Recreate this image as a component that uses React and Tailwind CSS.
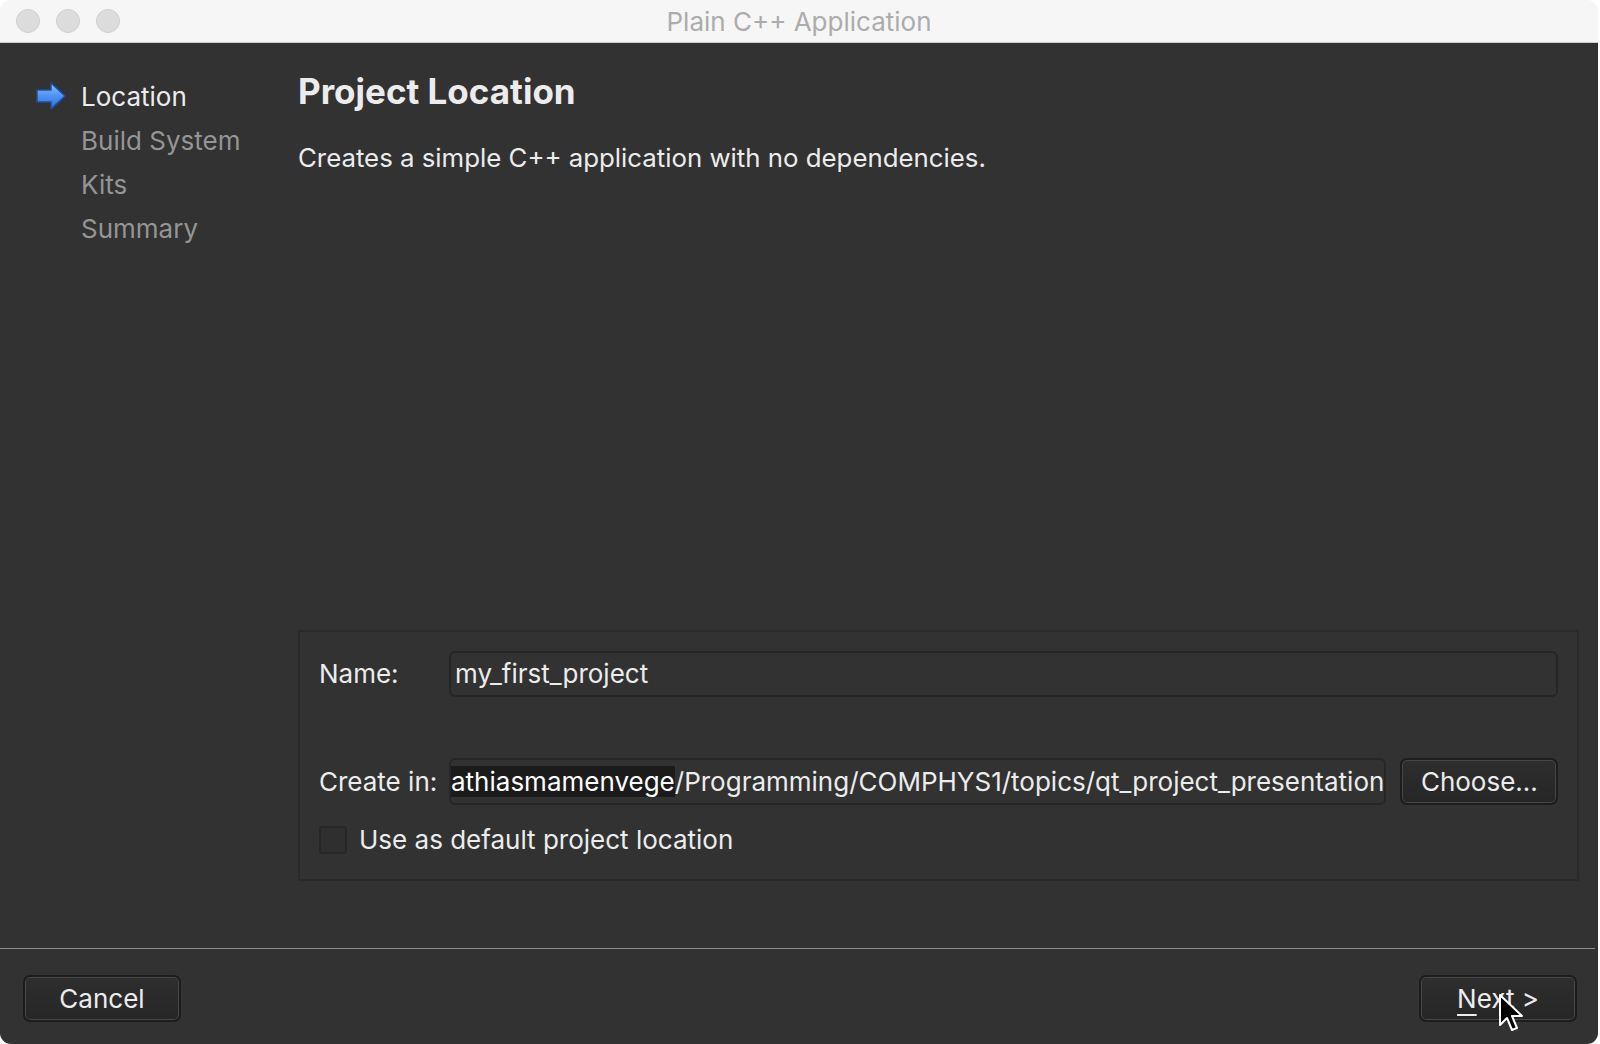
import React from 'react';

const font = { fontFamily: 'Inter, "Noto Sans", sans-serif' };

function TrafficLight() {
  return <div className="w-[24px] h-[24px] rounded-full bg-[#dcdcdc] border border-[#cfcfcf]" />;
}

function StepArrow() {
  return (
    <svg width="32" height="30" viewBox="0 0 32 30">
      <defs>
        <linearGradient id="arrowFill" x1="0" y1="0" x2="0" y2="1">
          <stop offset="0" stopColor="#8cc0ff" />
          <stop offset="0.5" stopColor="#4f92f0" />
          <stop offset="1" stopColor="#2f6fd6" />
        </linearGradient>
      </defs>
      <path
        d="M2 9 L16 9 L16 2 L30 15 L16 28 L16 21 L2 21 Z"
        fill="url(#arrowFill)"
        stroke="#1d4fa8"
        strokeWidth="1.5"
        strokeLinejoin="round"
      />
    </svg>
  );
}

function Cursor() {
  return (
    <svg width="26" height="40" viewBox="0 0 13 20" className="absolute left-[1498px] top-[993px]">
      <path
        d="M1 1 L1 16 L4.5 12.5 L7 18.5 L9.5 17.5 L7 11.5 L12 11.5 Z"
        fill="#000"
        stroke="#fff"
        strokeWidth="1"
        strokeLinejoin="round"
      />
    </svg>
  );
}

function MacButton({ children, className = '' }) {
  return (
    <div
      className={
        'h-[47px] rounded-[7px] border-2 border-[#1d1d1d] bg-gradient-to-b from-[#2e2e2e] to-[#262626] shadow-[inset_0_0_0_1px_#474747] flex items-center justify-center text-[26px] text-[#ececec] ' +
        className
      }
    >
      {children}
    </div>
  );
}

export default function App() {
  const steps = ['Location', 'Build System', 'Kits', 'Summary'];

  return (
    <div className="w-[1600px] h-[1044px] bg-white relative overflow-hidden" style={font}>
      <div className="w-[1598px] h-[1044px] rounded-[11px] overflow-hidden flex flex-col">
        {/* title bar */}
        <div className="h-[43px] shrink-0 bg-[#f6f6f6] border-b border-[#cdcdcd] flex items-center relative">
          <div className="flex items-center gap-[16px] pl-[16px]">
            <TrafficLight />
            <TrafficLight />
            <TrafficLight />
          </div>
          <div className="absolute inset-0 flex items-center justify-center text-[26px] text-[#acacac]">
            Plain C++ Application
          </div>
        </div>

        {/* body */}
        <div className="flex-1 bg-[#323232] flex flex-col">
          <div className="flex-1 flex">
            <div className="w-[298px] shrink-0 pt-[31px]">
              {steps.map((step, i) => (
                <div key={step} className="h-[44px] flex items-center">
                  <div className="w-[81px] flex justify-end pr-[14px]">
                    {i === 0 && <StepArrow />}
                  </div>
                  <span className={'text-[26px] ' + (i === 0 ? 'text-[#ececec]' : 'text-[#959595]')}>{step}</span>
                </div>
              ))}
            </div>

            <div className="flex-1 flex flex-col pt-[28px] pr-[21px] pb-[67px]">
              <h1 className="text-[35px] leading-[40px] font-bold text-[#ececec]">Project Location</h1>
              <p className="mt-[29px] text-[25.8px] leading-[36px] text-[#ececec]">
                Creates a simple C++ application with no dependencies.
              </p>

              <div className="mt-auto border-2 border-[#2a2a2a] px-[19px] pt-[19px] pb-[25px] text-[26px] leading-[28px] text-[#ececec]">
                <div className="flex items-center">
                  <span className="w-[130px] shrink-0">Name:</span>
                  <div className="flex-1 h-[46px] rounded-[6px] border-2 border-[#262626] bg-[#323232] flex items-center px-[4px]">
                    my_first_project
                  </div>
                </div>

                <div className="flex items-center mt-[61px]">
                  <span className="w-[130px] shrink-0">Create in:</span>
                  <div className="flex-1 h-[47px] rounded-[6px] border-2 border-[#262626] bg-[#323232] flex items-center overflow-hidden whitespace-nowrap">
                    <span className="bg-[#1b1b1b] text-white leading-[31px]">athiasmamenvege</span>
                    <span>/Programming/COMPHYS1/topics/qt_project_presentation</span>
                  </div>
                  <MacButton className="w-[158px] ml-[14px] shrink-0">Choose...</MacButton>
                </div>

                <div className="flex items-center mt-[21px]">
                  <div className="w-[28px] h-[28px] rounded-[3px] border-2 border-[#262626] bg-[#2f2f2f]" />
                  <span className="ml-[12px]">Use as default project location</span>
                </div>
              </div>
            </div>
          </div>

          {/* footer */}
          <div className="h-px bg-[#8c8c8c] mr-[3px]" />
          <div className="h-[95px] flex items-start justify-between pt-[26px] pl-[23px] pr-[21px]">
            <MacButton className="w-[158px]">Cancel</MacButton>
            <MacButton className="w-[158px]">
              <span className="underline decoration-2 underline-offset-[6px] decoration-[#ececec]">N</span>
              <span>ext &gt;</span>
            </MacButton>
          </div>
        </div>
      </div>
      <Cursor />
    </div>
  );
}
